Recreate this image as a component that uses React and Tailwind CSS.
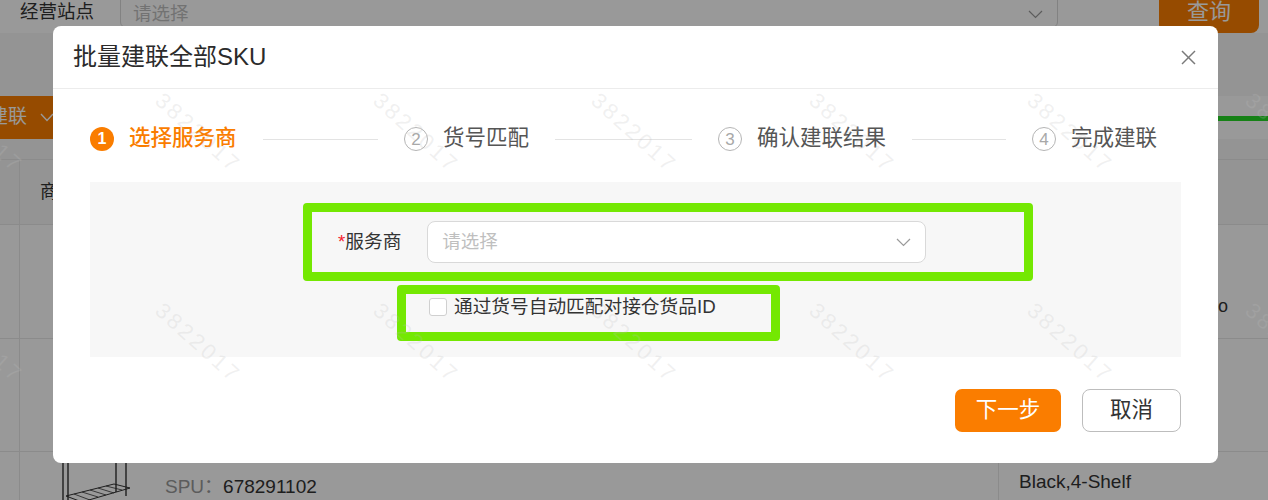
import React from 'react';

const font = "font-['Liberation_Sans','Noto_Sans_CJK_SC',sans-serif]";

const steps = ['选择服务商', '货号匹配', '确认建联结果', '完成建联'];

const wmCols = [-20, 198, 416, 634, 852, 1070, 1288];
const wmRows = [133, 343];

const Chevron = ({ className = '' }) => (
  <svg width="15" height="9" viewBox="0 0 15 9" className={className} fill="none">
    <polyline points="1,1 7.5,7.5 14,1" stroke="#9a9a9a" strokeWidth="1.2" />
  </svg>
);

const Shelf = () => (
  <svg width="72" height="44" viewBox="0 0 72 44" fill="none" stroke="#333" strokeWidth="1.4">
    <line x1="3" y1="0" x2="3" y2="44" />
    <line x1="8" y1="0" x2="8" y2="44" />
    <line x1="56" y1="0" x2="56" y2="30" />
    <line x1="66" y1="0" x2="66" y2="34" />
    <polygon points="6,34 54,22 70,26 22,40" strokeWidth="1" />
    <line x1="14" y1="32" x2="30" y2="38" strokeWidth="0.8" />
    <line x1="22" y1="30" x2="38" y2="35" strokeWidth="0.8" />
    <line x1="30" y1="28" x2="46" y2="33" strokeWidth="0.8" />
    <line x1="38" y1="26" x2="54" y2="31" strokeWidth="0.8" />
    <line x1="46" y1="24" x2="62" y2="28" strokeWidth="0.8" />
  </svg>
);

const Page = () => (
  <div className="flex h-full flex-col bg-[#f7f7f7]">
    {/* filter row */}
    <div className="mt-[-10px] flex h-[43px] items-center bg-white">
      <div className="w-[120px] pl-[20px] text-[18.5px] text-[#333]">经营站点</div>
      <div className="flex h-[38px] w-[938px] items-center justify-between self-start rounded-[6px] border border-[#d9d9d9] pl-[12px] pr-[14px]">
        <span className="mt-[10px] text-[18.5px] text-[#bfbfbf]">请选择</span>
        <Chevron className="mt-[10px]" />
      </div>
      <div className="ml-[101px] flex h-[43px] w-[100px] items-center justify-center rounded-[8px] bg-[#fa7d00] text-[22px] text-white">
        查询
      </div>
    </div>

    {/* toolbar */}
    <div className="mt-[63px] flex h-[43px] items-center justify-between">
      <div className="ml-[-30px] flex h-[43px] w-[200px] items-center rounded-[6px] bg-[#fa7d00] pl-[19px] text-white">
        <span className="text-[19px]">建联</span>
        <svg width="14" height="9" viewBox="0 0 14 9" className="ml-[13px]" fill="none">
          <polyline points="1,1 7,7.5 13,1" stroke="#fff" strokeWidth="1.4" />
        </svg>
      </div>
      <div className="h-[43px] w-[400px] bg-white pt-[20px]">
        <div className="h-[5px] w-full bg-[#26d826]" />
      </div>
    </div>

    {/* table */}
    <div className="mt-[20px] flex flex-1 flex-col border-t border-[#e8e8e8] bg-white">
      <div className="flex h-[65px] border-b border-[#e8e8e8] bg-[#f7f7f7]">
        <div className="w-[20px] border-r border-[#e8e8e8]" />
        <div className="flex items-center pl-[20px] text-[18px] text-[#333]">商品信息</div>
      </div>
      <div className="flex h-[114px] border-b border-[#e8e8e8]">
        <div className="w-[20px] border-r border-[#e8e8e8]" />
        <div className="flex flex-1 items-end justify-end pb-[18px] pr-[40px] text-[18px] text-[#333]">Demo</div>
      </div>
      <div className="flex h-[113px] border-b border-[#e8e8e8]">
        <div className="w-[20px] border-r border-[#e8e8e8]" />
      </div>
      <div className="flex flex-1">
        <div className="w-[20px] border-r border-[#e8e8e8]" />
        <div className="ml-[40px] mt-[10px]">
          <Shelf />
        </div>
        <div className="ml-[33px] mt-[24px] text-[19px] leading-[22px]">
          <span className="text-[#999]">SPU：</span>
          <span className="text-[#333]">678291102</span>
        </div>
        <div className="flex-1" />
        <div className="w-[270px] border-l border-[#e8e8e8] pl-[20px] pt-[19px] text-[19px] leading-[22px] text-[#333]">
          Black,4-Shelf
        </div>
      </div>
    </div>
  </div>
);

const Modal = () => (
  <div className="absolute left-[53px] top-[26px] w-[1165px] rounded-[8px] bg-white">
    {/* header */}
    <div className="flex h-[63px] items-center justify-between border-b border-[#ececec] pl-[20px] pr-[22px]">
      <span className="text-[24px] leading-none text-[#2b2b2b]">批量建联全部SKU</span>
      <svg width="15" height="15" viewBox="0 0 15 15" fill="none" stroke="#7a7a7a" strokeWidth="1.5">
        <line x1="1" y1="1" x2="14" y2="14" />
        <line x1="14" y1="1" x2="1" y2="14" />
      </svg>
    </div>

    {/* body */}
    <div className="px-[37px] pb-[31px] pt-[35px]">
      <div className="flex h-[30px] w-[1067px] items-center">
        {steps.map((s, i) => (
          <div key={s} className={i < 3 ? 'flex flex-1 items-center' : 'flex flex-none items-center'}>
            {i === 0 ? (
              <span className="flex h-[24px] w-[24px] items-center justify-center rounded-full bg-[#fa7d00] text-[16px] font-bold leading-none text-white">
                1
              </span>
            ) : (
              <span className="flex h-[24px] w-[24px] items-center justify-center rounded-full border-[1.5px] border-[#b5b5b5] text-[17px] leading-none text-[#a8a8a8]">
                {i + 1}
              </span>
            )}
            <span
              className={
                i === 0
                  ? 'ml-[15px] whitespace-nowrap text-[21.5px] font-medium leading-none text-[#fa7d00]'
                  : 'ml-[15px] whitespace-nowrap text-[21.5px] leading-none text-[#555]'
              }
            >
              {s}
            </span>
            {i < 3 && <div className="mx-[26px] h-px flex-1 bg-[#e3e3e3]" />}
          </div>
        ))}
      </div>

      <div className="mt-[28px] h-[175px] bg-[#f7f7f7] pt-[21px]">
        <div className="ml-[213px] flex h-[78px] w-[730px] items-center rounded-[4px] border-[9px] border-[#74e802] pl-[26px]">
          <span className="text-[18.7px] leading-none text-[#333]">
            <span className="text-[#f5222d]">*</span>服务商
          </span>
          <div className="ml-[26px] flex h-[42px] w-[499px] items-center justify-between rounded-[8px] border border-[#d9d9d9] bg-white pl-[14px] pr-[14px]">
            <span className="text-[18.5px] text-[#bfbfbf]">请选择</span>
            <Chevron />
          </div>
        </div>
        <div className="ml-[307px] mt-[4px] h-[56px] w-[383px] rounded-[4px] border-[9px] border-[#74e802] pl-[23px] pt-[4px]">
          <label className="flex items-center">
            <span className="h-[18px] w-[18px] rounded-[3px] border border-[#d0d0d0] bg-white" />
            <span className="ml-[7px] text-[18.7px] leading-[18px] text-[#333]">通过货号自动匹配对接仓货品ID</span>
          </label>
        </div>
      </div>

      <div className="mt-[32px] flex justify-end gap-[21px]">
        <button className="flex h-[43px] w-[106px] items-center justify-center rounded-[7px] bg-[#fa7d00] text-[21.5px] text-white">
          下一步
        </button>
        <button className="flex h-[43px] w-[99px] items-center justify-center rounded-[8px] border border-[#bdbdbd] bg-white text-[21.5px] text-[#333]">
          取消
        </button>
      </div>
    </div>
  </div>
);

const Watermarks = () => (
  <div className="pointer-events-none absolute inset-0">
    {wmRows.map((cy) =>
      wmCols.map((cx) => (
        <span
          key={`${cx}-${cy}`}
          className="absolute h-[24px] w-[110px] rotate-[42deg] text-center text-[22px] leading-[24px] tracking-[3px] text-[rgba(190,190,190,0.22)]"
          style={{ left: cx - 55, top: cy - 12 }}
        >
          3822017
        </span>
      ))
    )}
  </div>
);

export default function App() {
  return (
    <div className={`relative h-[500px] w-[1268px] overflow-hidden ${font}`}>
      <Page />
      <div className="absolute inset-0 bg-black/40" />
      <Modal />
      <Watermarks />
    </div>
  );
}
